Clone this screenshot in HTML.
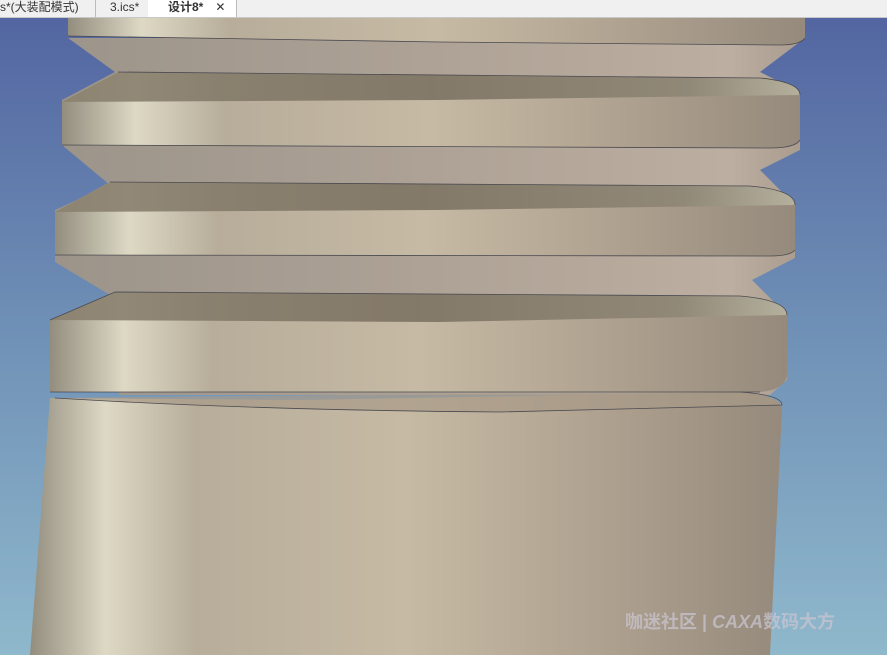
<!DOCTYPE html>
<html><head><meta charset="utf-8"><style>
html,body{margin:0;padding:0;width:887px;height:655px;overflow:hidden;font-family:"Liberation Sans","Noto Sans CJK SC",sans-serif}
.tabs{position:absolute;left:0;top:0;width:887px;height:17px;background:#f0f0f0;border-bottom:1px solid #c8c8c8;font-size:12px;color:#333}
.t{position:absolute;top:0;height:17px;line-height:15px}
</style></head><body>
<svg width="887" height="655" style="position:absolute;left:0;top:0">
<defs>
<linearGradient id="bg" x1="0" y1="0" x2="0" y2="1"><stop offset="0" stop-color="#5163a0"/><stop offset="0.5" stop-color="#6f90b6"/><stop offset="1" stop-color="#8fb8cc"/></linearGradient>
<linearGradient id="face" x1="0" y1="0" x2="1" y2="0">
<stop offset="0" stop-color="#938d7e"/><stop offset="0.1" stop-color="#ddd9c5"/><stop offset="0.22" stop-color="#b7ad9a"/><stop offset="0.5" stop-color="#c6baa4"/><stop offset="0.75" stop-color="#b0a290"/><stop offset="1" stop-color="#958a7c"/></linearGradient>
<linearGradient id="groove" x1="0" y1="0" x2="1" y2="0">
<stop offset="0" stop-color="#9c948a"/><stop offset="0.5" stop-color="#aea296"/><stop offset="0.9" stop-color="#bcaea0"/><stop offset="1" stop-color="#a89a8c"/></linearGradient>
<linearGradient id="top" x1="0" y1="0" x2="1" y2="0">
<stop offset="0" stop-color="#8c8270"/><stop offset="0.5" stop-color="#7c7262"/><stop offset="0.85" stop-color="#8e8676"/><stop offset="1" stop-color="#b8b4a0"/></linearGradient>
</defs>
<rect width="887" height="655" fill="url(#bg)"/>
<path d="M68 38 L805 38 L760 72 L800 92 L800 150 L760 170 L795 205 L795 258 L752 280 L787 315 L787 380 L770 395 L120 395 L60 320 L110 295 L55 262 L55 210 L110 185 L62 145 L62 100 L115 72 Z" fill="url(#groove)"/>
<path d="M68 17 L805 17 L805 38 Q800 45 780 45 L440 42 L68 36 Z" fill="url(#face)"/>
<path d="M62 102 L118 72 L760 78 Q800 82 800 95 L800 140 Q795 148 770 148 L62 145 Z" fill="url(#face)"/>
<path d="M62 102 L118 72 L760 78 Q800 82 800 95 L440 100 Z" fill="url(#top)" opacity="0.9"/>
<path d="M55 212 L110 182 L750 186 Q795 190 795 205 L795 250 Q790 256 770 256 L55 255 Z" fill="url(#face)"/>
<path d="M55 212 L110 182 L750 186 Q795 190 795 205 L440 210 Z" fill="url(#top)" opacity="0.9"/>
<path d="M50 320 L115 292 L740 296 Q787 300 787 315 L787 375 Q785 390 760 392 L50 392 Z" fill="url(#face)"/>
<path d="M50 320 L115 292 L740 296 Q787 300 787 315 L440 322 Z" fill="url(#top)" opacity="0.9"/>
<path d="M55 398 L300 400 L740 392 Q782 395 782 410 L770 655 L30 655 L50 398 Z" fill="url(#face)"/>
<path d="M55 398 Q300 395 740 392 Q775 395 782 405 L500 412 Q250 410 55 398 Z" fill="#a89a88" opacity="0.7"/>
<g stroke="#4a4a50" stroke-width="0.8" fill="none">
<path d="M68 36 L440 42 L780 45 Q800 45 805 38"/>
<path d="M62 145 L770 148 Q795 148 800 140"/>
<path d="M800 95 Q800 82 760 78 L118 72"/>
<path d="M55 255 L770 256 Q790 256 795 250"/>
<path d="M795 205 Q795 190 750 186 L110 182"/>
<path d="M50 392 L760 392"/>
<path d="M787 315 Q787 300 740 296 L115 292 L50 320"/>
<path d="M55 398 Q250 410 500 412 L782 405 Q782 395 740 392"/>
</g>
<text x="625" y="628" font-size="18" font-weight="bold" fill="#c8c4d0" fill-opacity="0.75" font-family="Liberation Sans,Noto Sans CJK SC,sans-serif">咖迷社区 | <tspan font-style="italic">CAXA</tspan>数码大方</text>
</svg>
<div class="tabs">
<div class="t" style="left:0;width:95px;border-right:1px solid #bbb">s*(大装配模式)</div>
<div class="t" style="left:110px">3.ics*</div>
<div class="t" style="left:148px;width:88px;background:#fff;border-right:1px solid #bbb"><b style="margin-left:20px">设计8*</b><span style="margin-left:12px">✕</span></div>
</div>
</body></html>
